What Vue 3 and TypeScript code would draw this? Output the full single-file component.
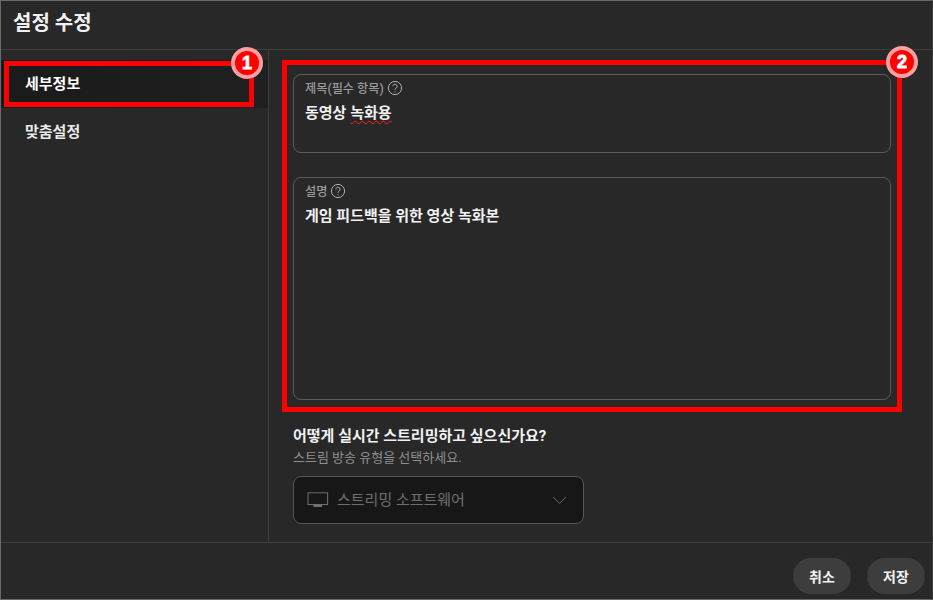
<script setup lang="ts">
const navItems: { label: string; active: boolean }[] = [
  { label: '세부정보', active: true },
  { label: '맞춤설정', active: false },
]
</script>

<template>
  <div class="dialog">
    <header class="head"><h1>설정 수정</h1></header>
    <div class="body">
      <nav class="side">
        <div v-for="item in navItems" :key="item.label" class="nav" :class="{ active: item.active }">{{ item.label }}</div>
      </nav>
      <main class="main">
        <section class="field title-field">
          <div class="label">제목(필수 항목)
            <svg class="help" viewBox="0 0 16 16" width="16" height="16" fill="none" stroke="currentColor"><circle cx="8" cy="8" r="6.6" stroke-width="1"/><path d="M5.9 6.3a2.1 2.1 0 1 1 3.3 1.7c-.8.5-1.2.9-1.2 1.8" stroke-width="1"/><circle cx="8" cy="11.8" r=".6" fill="currentColor" stroke="none"/></svg>
          </div>
          <div class="value">동영상 <span class="typo">녹화용</span></div>
        </section>
        <section class="field desc-field">
          <div class="label">설명
            <svg class="help" viewBox="0 0 16 16" width="16" height="16" fill="none" stroke="currentColor"><circle cx="8" cy="8" r="6.6" stroke-width="1"/><path d="M5.9 6.3a2.1 2.1 0 1 1 3.3 1.7c-.8.5-1.2.9-1.2 1.8" stroke-width="1"/><circle cx="8" cy="11.8" r=".6" fill="currentColor" stroke="none"/></svg>
          </div>
          <div class="value">게임 피드백을 위한 영상 녹화본</div>
        </section>
        <h2 class="q">어떻게 실시간 스트리밍하고 싶으신가요?</h2>
        <p class="sub">스트림 방송 유형을 선택하세요.</p>
        <div class="select">
          <svg class="tv" viewBox="0 0 22 16" width="22" height="16" fill="none" stroke="currentColor"><rect x="1" y=".8" width="19.6" height="11.7" stroke-width="1"/><path d="M6.5 14h8.5" stroke-width="2"/></svg>
          <span class="sel-text">스트리밍 소프트웨어</span>
          <svg class="chev" viewBox="0 0 16 10" width="15" height="9" fill="none" stroke="currentColor"><path d="M1 1.2l7 7 7-7" stroke-width="1.1"/></svg>
        </div>
      </main>
    </div>
    <footer class="foot">
      <button class="btn">취소</button>
      <button class="btn">저장</button>
    </footer>

    <div class="mark mark1"></div>
    <div class="mark mark2"></div>
    <div class="badge badge1">1</div>
    <div class="badge badge2">2</div>
  </div>
</template>

<style>
html, body { margin: 0; background: #282828; }
</style>

<style scoped>
.dialog {
  position: relative;
  width: 933px;
  height: 600px;
  box-sizing: border-box;
  border: 1px solid #6a6a6a;
  border-right-color: #3a3a3a;
  background: #282828;
  color: #f1f1f1;
  font-family: Roboto, "Noto Sans CJK KR", sans-serif;
  display: flex;
  flex-direction: column;
  overflow: hidden;
}
.head {
  height: 48px;
  flex: none;
  border-bottom: 1px solid #3e3e3e;
  display: flex;
  align-items: center;
  padding-left: 12px;
}
.head h1 {
  margin: 0 0 4px;
  font-size: 20px;
  font-weight: 700;
  line-height: 28px;
}
.body { flex: 1; display: flex; min-height: 0; }
.side {
  width: 268px;
  flex: none;
  box-sizing: border-box;
  border-right: 1px solid #3e3e3e;
  padding-top: 10px;
}
.nav {
  height: 48px;
  display: flex;
  align-items: center;
  padding: 0 0 4px 24px;
  box-sizing: border-box;
  font-size: 15px;
  font-weight: 700;
  color: #eaeaea;
}
.nav.active { background: linear-gradient(90deg, #1a1a1a, #202020); color: #fff; }
.main { flex: 1; padding: 24px 0 0 24px; min-width: 0; }
.field {
  width: 598px;
  box-sizing: border-box;
  border: 1px solid #5c5c5c;
  border-radius: 8px;
  padding: 5px 11px 0;
  margin-bottom: 24px;
}
.title-field { height: 79px; }
.desc-field { height: 223px; margin-bottom: 0; }
.label {
  display: flex;
  align-items: center;
  gap: 4px;
  font-size: 12.2px;
  font-weight: 500;
  line-height: 18px;
  color: #9a9a9a;
}
.help { color: #b0b0b0; margin-top: -2px; margin-left: -1px; }
.value {
  font-size: 15px;
  font-weight: 700;
  line-height: 22px;
  margin-top: 4px;
  color: #f1f1f1;
}
.typo { text-decoration: underline wavy #ff2020 1px; text-underline-offset: 2px; }
.q {
  margin: 26px 0 0;
  font-size: 15px;
  font-weight: 700;
  line-height: 20px;
  color: #f1f1f1;
}
.sub {
  margin: 3px 0 0;
  font-size: 13px;
  line-height: 18px;
  color: #8f8f8f;
}
.select {
  margin-top: 9px;
  width: 291px;
  height: 48px;
  box-sizing: border-box;
  border: 1px solid #565656;
  border-radius: 8px;
  background: #171717;
  display: flex;
  align-items: center;
  padding: 0 16px 0 13px;
  color: #6e6e6e;
}
.sel-text { margin-left: 8px; font-size: 15px; flex: 1; padding-bottom: 4px; }
.foot {
  height: 57px;
  flex: none;
  border-top: 1px solid #3e3e3e;
  display: flex;
  justify-content: flex-end;
  align-items: flex-start;
  gap: 16px;
  padding: 15px 7px 0 0;
  box-sizing: border-box;
}
.btn {
  width: 58px;
  height: 36px;
  border: none;
  border-radius: 18px;
  background: #3d3d3d;
  color: #f1f1f1;
  font: 700 14px Roboto, "Noto Sans CJK KR", sans-serif;
  padding: 0;
}
.mark {
  position: absolute;
  box-sizing: border-box;
  border: 5px solid #ff0000;
  pointer-events: none;
}
.mark1 { left: 3px; top: 60px; width: 250px; height: 46px; }
.mark2 { left: 281px; top: 59px; width: 620px; height: 352px; }
.badge {
  position: absolute;
  width: 24px;
  height: 24px;
  border-radius: 50%;
  background: #ff0000;
  box-shadow: 0 0 0 4px #ff9f9f;
  color: #fff;
  font: 900 18px/24px "Liberation Sans", Arial, sans-serif;
  text-align: center;
  -webkit-text-stroke: .9px #fff;
}
.badge1 { left: 234px; top: 50px; }
.badge2 { left: 889px; top: 49px; }
</style>
